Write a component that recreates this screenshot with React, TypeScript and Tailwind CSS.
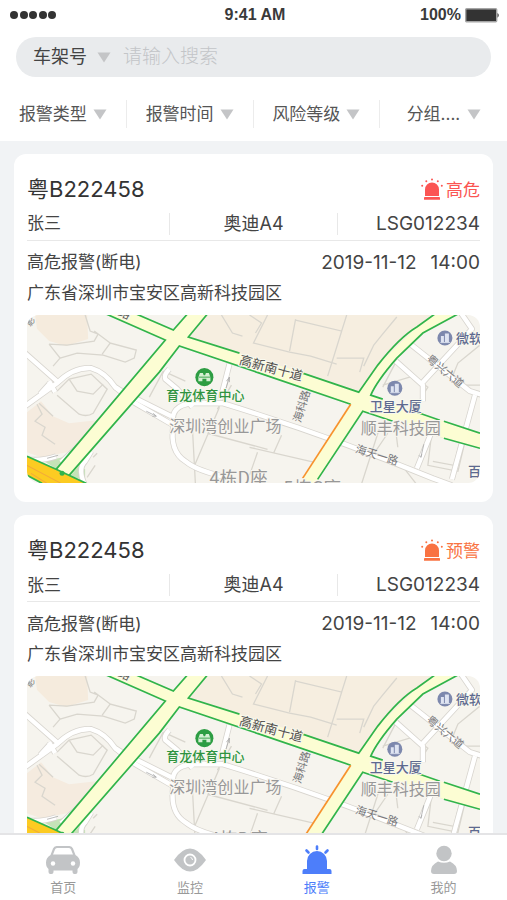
import React from "react";

const Caret = () => (
  <svg viewBox="0 0 14 11" className="pointer-events-none h-[11px] w-[14px] shrink-0" aria-hidden="true">
    <path d="M0.5 0.5H13.5L7 10.5Z" fill="#c4c5c7" />
  </svg>
);

const StatusBar = () => (
  <div className="grid h-[30px] grid-cols-3 items-center pl-[10px] pr-[7px] font-['Liberation_Sans',sans-serif] text-base font-bold text-[#3a3a3a]">
    <svg viewBox="0 0 50 10" className="h-[10px] w-[50px]" aria-hidden="true">
      {[4, 14, 23, 33, 42].map((cx) => (
        <circle key={cx} cx={cx} cy="5" r="4" fill="#333" />
      ))}
    </svg>
    <span className="text-center">9:41 AM</span>
    <div className="flex items-center justify-end gap-1">
      <span>100%</span>
      <svg viewBox="0 0 35 15" className="h-[15px] w-[35px]" aria-hidden="true">
        <rect x="0.7" y="0.7" width="31" height="13" rx="1" fill="#333" stroke="#a5a5a5" strokeWidth="1.4" />
        <path d="M32.5 5Q35 7.2 32.5 9.8Z" fill="#333" />
      </svg>
    </div>
  </div>
);

const SearchBar = () => (
  <div className="mx-4 mt-[7px] flex h-10 items-center rounded-full bg-[#e9ebed] pl-[17px] pr-4 text-lg">
    <div className="flex items-center gap-[10px]">
      <select aria-label="搜索类型" className="appearance-none bg-transparent text-[#444] outline-none">
        <option>车架号</option>
      </select>
      <Caret />
    </div>
    <input
      type="text"
      aria-label="搜索"
      placeholder="请输入搜索"
      className="ml-3 min-w-0 flex-1 bg-transparent text-[19px] font-light outline-none placeholder:text-[#c3c5c8]"
    />
  </div>
);

const filters = ["报警类型", "报警时间", "风险等级", "分组...."];

const FilterBar = () => (
  <div className="mt-[23px] grid h-7 grid-cols-4 divide-x divide-[#ececec]">
    {filters.map((item) => (
      <div key={item} className="flex items-center justify-center gap-[6px]">
        <select
          aria-label={item}
          className="appearance-none bg-transparent pt-px text-[17px] text-[#555] outline-none"
        >
          <option>{item}</option>
        </select>
        <Caret />
      </div>
    ))}
  </div>
);

const AlarmIcon = () => (
  <svg viewBox="0 0 22 22" className="h-[22px] w-[22px]" fill="currentColor" aria-hidden="true">
    <path d="M4 18V11.5a7 7 0 0 1 14 0V18Z" />
    <rect x="3" y="19" width="16" height="2.8" rx="0.4" />
    <circle cx="1.2" cy="7.7" r="1" />
    <circle cx="5.3" cy="3.2" r="1" />
    <circle cx="11" cy="1.4" r="1" />
    <circle cx="16.8" cy="3.2" r="1" />
    <circle cx="20.8" cy="7.7" r="1" />
  </svg>
);

const minorRoads = [
  "M-2 38L32 68M-2 91L30 68Q46 52 64 53Q78 57 88 72L96 77L146 102",
  "M13 79L23 68M22 66L28 77",
  "M88 72L108 88L146 110M142 54Q136 60 138 64L150 74L165 92",
  "M202 49L193 84M146 110Q142 90 165 88L195 88Q300 120 405 163L424 170",
  "M146 110Q142 136 158 146Q170 156 200 162",
  "M380 27L442 76L455 80M395 67L444 14L433 -2M368 46L395 70V86M404 116L389 153M447 80L424 164",
  "M29 141Q15 146 -2 144M58 170Q50 154 58 146L64 136M72 112L34 147",
];

const CityMap = () => (
  <svg
    viewBox="0 0 452 168"
    role="img"
    aria-label="报警位置地图"
    className="mt-[7px] block h-auto w-full rounded-xl"
    fontFamily="'Noto Sans CJK SC', sans-serif"
  >
    <rect width="452" height="168" fill="#f6f4ee" />

    <path d="M8 0H60L61 24L39 31L22 26L10 14Z" fill="#f5ebdd" />
    <path d="M0 97L14 86L26 101L42 108L78 104L40 137L14 142L0 137Z" fill="#f5ebdf" />
    <path d="M180 0H407L389 12L350 50L331 77L275 58L161 22Z" fill="#f6eee0" />
    <path d="M17 146L36 142L58 154V165L40 160Z" fill="#c5e3b8" />

    <g fill="none" stroke="#d9d6ce" strokeWidth="1.3">
      <path d="M58 0L63 16L71 19L67 26L40 30L22 29M22 29L33 43L26 51M33 43L50 38L76 40L98 47L107 43L109 35L83 28L75 39M83 28L67 16" />
      <path d="M30 76L42 64L64 59L80 74L66 98Q60 102 52 99L30 80M42 64L50 76L66 79L76 69" />
      <path d="M10 89L15 99L8 106L18 112L15 120L28 129M12 88L26 101" />
      <path d="M194 0L205 18L215 21M240 0L226 28L262 37L283 41L309 49M268 4L262 36M268 5L314 16L319 0M314 16L300 61M369 2L354 20L346 30L336 51M309 43H336L332 57" />
      <path d="M222 0L234 8L228 18M122 82L136 56M136 56L158 66M120 88L130 95M165 112L168 168M192 92L166 153M180 118L240 134M222 132L300 150M230 137L222 160M254 120L246 138" />
      <path d="M355 70L385 61L400 72L390 88M355 72L368 47M352 112L334 168M360 118L345 140M404 116L400 150L430 156L438 122M368 116L370 132M408 120L432 126L426 150L405 146" />
      <path d="M425 60L430 48L452 30M425 60L436 70L452 70M66 142L70 138M60 162L68 150M374 150L388 168M190 94L204 70" />
    </g>

    <g fill="none" stroke="#d8d5cf" strokeWidth="6" strokeLinejoin="round">
      {minorRoads.map((d) => (
        <path key={d} d={d} />
      ))}
    </g>
    <g fill="none" stroke="#fff" strokeWidth="4.4" strokeLinejoin="round">
      {minorRoads.map((d) => (
        <path key={d} d={d} />
      ))}
    </g>

    {/* main roads */}
    <g fill="#fcfdd3">
      <path d="M160 -1L146 15L138 25L29 154L42 162L132 57L152 31L161 22L180 -1Z" />
      <path d="M79 -1L138 25L152 31L232 58L323 89L335 96L365 105L416 123L452 133V118L389 97L343 80L331 77L275 58L161 22L146 15L109 -1Z" />
      <path d="M331 77L350 50L389 12L407 -1H430L395 18L369 43L347 72L343 80L335 96L290 164L275 168L323 89Z" />
      <path d="M323 89L335 96L288 168H272Z" />
    </g>
    <path d="M0 141L29 154L59 168H15L0 160Z" fill="#fccb22" />
    <path d="M0 150L34 168M4 158L20 168" stroke="#f2a93b" strokeWidth="1" />
    <g fill="none" stroke="#31b44b" strokeWidth="1.7">
      <path d="M160 -1L146 15L109 -1M79 -1L138 25L29 154M180 -1L161 22L212 38M275 58L331 77L350 50Q372 22 389 12L407 -1" />
      <path d="M42 160L132 57L152 31L232 58L323 89M430 -1L395 18L369 43Q349 66 343 80L355 84M389 97L412 105M416 106L452 118" />
      <path d="M290 164L335 96L365 106M416 123L452 133M0 141L29 154L59 168M0 160L15 168" />
    </g>
    <path d="M323 89L275 163" stroke="#f7922d" strokeWidth="1.7" />
    <circle cx="35" cy="158" r="2.5" fill="#31b44b" />

    <g fill="none" stroke="#aaa" strokeWidth="0.8">
      <path d="M119 96L129 101M126 98L129 101H125M198 75L202 62M199 66L202 62V67M393 142L396 129M394 139L393 142L391 140M20 143L31 140" />
    </g>

    <g fill="#54544f" stroke="#faf9ee" strokeWidth="2" paintOrder="stroke" fontSize="13">
      <text transform="translate(211 49) rotate(15)">高新南十道</text>
      <text transform="translate(90 0) rotate(22)" fontSize="12">路</text>
    </g>
    <g fill="#77777a" fontSize="11">
      <text transform="translate(273 108) rotate(-73)">海科路</text>
      <text transform="translate(327 137) rotate(17)">海天一路</text>
      <text transform="translate(398 45) rotate(40)">粤兴六道</text>
      <text transform="translate(3 12) rotate(-50)" fontSize="9">影</text>
    </g>

    <circle cx="177" cy="62" r="9" fill="#2d9d43" />
    <path
      d="M172.5 58h3l.8 2h1.4l.8-2h3l1.5 4v4h-4v-2.5h-4V66h-4v-4Z"
      fill="#d5f0d4"
    />
    <path d="M171.5 62H183" stroke="#2d9d43" strokeWidth="0.9" />
    <text x="139" y="85" fontSize="13" fontWeight="500" fill="#2f9340" stroke="#f6f8ee" strokeWidth="2" paintOrder="stroke">
      育龙体育中心
    </text>

    {[
      [417, 23],
      [367, 73],
    ].map(([x, y]) => (
      <g key={x} transform={`translate(${x} ${y})`}>
        <circle r="7.5" fill="#7d88ad" />
        <path d="M-4 4V-2H-1V4ZM0 4V-4.5H4V4Z" fill="#dfe4f2" />
        <path d="M-4.5 4.5H5" stroke="#dfe4f2" strokeWidth="0.9" />
      </g>
    ))}
    <g fill="#5d698f" stroke="#f8f8ee" strokeWidth="2" paintOrder="stroke" fontSize="13" fontWeight="500">
      <text x="428" y="28">微软</text>
      <text x="342" y="96">卫星大厦</text>
      <text x="440" y="161">百度</text>
    </g>

    <g fill="#989898" stroke="#f8f6f0" strokeWidth="2" paintOrder="stroke" fontSize="16">
      <text x="142" y="117">深圳湾创业广场</text>
      <text x="333" y="119">顺丰科技园</text>
      <text x="182" y="170" fontSize="18">4栋D座</text>
      <text x="256" y="180" fontSize="18">5栋C座</text>
    </g>
  </svg>
);

interface AlarmCardProps {
  plate: string;
  level: string;
  levelClass: string;
}

const AlarmCard: React.FC<AlarmCardProps> = ({ plate, level, levelClass }) => {
  return (
    <article className="rounded-xl bg-white px-[13px] pb-[19px] pt-[19px] text-[17px] text-[#444]">
      <div className="flex h-8 items-center justify-between">
        <h2 className="text-[22px] text-[#333]">{plate}</h2>
        <div className={`flex items-center gap-[3px] ${levelClass}`}>
          <AlarmIcon />
          <span className="pt-[3px]">{level}</span>
        </div>
      </div>
      <div className="mt-[7px] flex h-6 items-center">
        <span className="flex-1">张三</span>
        <span className="h-[22px] w-[169px] border-x border-[#e8e8e8] text-center text-lg leading-[22px]">
          奥迪A4
        </span>
        <span className="flex-1 text-right text-[19px]">LSG012234</span>
      </div>
      <div className="mt-1 border-t border-[#e8e8e8] pt-[7px]">
        <div className="flex h-[30px] items-center justify-between">
          <span>高危报警(断电)</span>
          <time className="flex gap-[14px] text-[19px]">
            <span>2019-11-12</span>
            <span>14:00</span>
          </time>
        </div>
        <p className="leading-[30px]">广东省深圳市宝安区高新科技园区</p>
      </div>
      <CityMap />
    </article>
  );
};

const cards = [
  { plate: "粤B222458", level: "高危", levelClass: "text-[#fb5553]" },
  { plate: "粤B222458", level: "预警", levelClass: "text-[#f97342]" },
];

const tabs = [
  {
    name: "首页",
    icon: (
      <>
        <path
          fillRule="evenodd"
          d="M10.5 1H23.5Q26 1 27 3.5L29.5 10Q34 12.5 34 17.5Q34 22 31.5 24V27Q31.5 29 29.5 29H28.5Q26.5 29 26.5 27V25.5H7.5V27Q7.5 29 5.5 29H4.5Q2.5 29 2.5 27V24Q0 22 0 17.5Q0 12.5 4.5 10L7 3.5Q8 1 10.5 1ZM11 3Q9.5 3 9 4.5L7 9.5H27L25 4.5Q24.5 3 23 3Z"
        />
        <circle cx="7" cy="18.5" r="2.2" fill="#fff" />
        <circle cx="27" cy="18.5" r="2.2" fill="#fff" />
      </>
    ),
  },
  {
    name: "监控",
    icon: (
      <>
        <path d="M1 15Q9 3.5 17 3.5T33 15Q25 26.5 17 26.5T1 15Z" />
        <circle cx="17" cy="15" r="5.5" fill="none" stroke="#fff" strokeWidth="1.8" />
        <path d="M17.5 12.5A2.5 2.5 0 0 1 19.5 15" fill="none" stroke="#fff" strokeWidth="1" />
      </>
    ),
  },
  {
    name: "报警",
    active: true,
    icon: (
      <>
        <path d="M7 24V16A10 10 0 0 1 27 16V24H29.5Q31.5 24 31.5 26V29H2.5V26Q2.5 24 4.5 24Z" />
        <path d="M17 1.5V4M6.5 5.5L8.5 7.5M27.5 5.5L25.5 7.5" stroke="currentColor" strokeWidth="2.6" strokeLinecap="round" />
      </>
    ),
  },
  {
    name: "我的",
    icon: (
      <>
        <circle cx="17" cy="8.5" r="7.7" />
        <path d="M4 26Q4 20 11 16.5Q17 19 23 16.5Q30 20 30 26Q30 29 27 29H7Q4 29 4 26Z" />
      </>
    ),
  },
];

const TabBar = () => (
  <nav className="grid h-[67px] shrink-0 grid-cols-4 border-t-2 border-[#e4e4e6] bg-white">
    {tabs.map((tab) => (
      <a
        key={tab.name}
        href="#"
        aria-current={tab.active ? "page" : undefined}
        className={`flex flex-col items-center pt-[10px] ${tab.active ? "text-[#4d7efa]" : "text-[#999]"}`}
      >
        <svg
          viewBox="0 0 34 30"
          className={`h-[30px] w-[34px] ${tab.active ? "text-[#4d7efa]" : "text-[#c2c4c6]"}`}
          fill="currentColor"
          aria-hidden="true"
        >
          {tab.icon}
        </svg>
        <span className="mt-1 text-[13px] leading-4">{tab.name}</span>
      </a>
    ))}
  </nav>
);

const App = () => {
  return (
    <div className="flex h-screen flex-col bg-[#f1f3f5] font-['Inter','Noto_Sans_CJK_SC',sans-serif]">
      <header className="shrink-0 bg-white pb-[13px]">
        <StatusBar />
        <SearchBar />
        <FilterBar />
      </header>
      <main className="flex min-h-0 flex-1 flex-col gap-[13px] overflow-y-auto px-[14px] pt-[13px] [scrollbar-width:none]">
        {cards.map((card) => (
          <AlarmCard key={card.level} {...card} />
        ))}
      </main>
      <TabBar />
    </div>
  );
};

export default App;
